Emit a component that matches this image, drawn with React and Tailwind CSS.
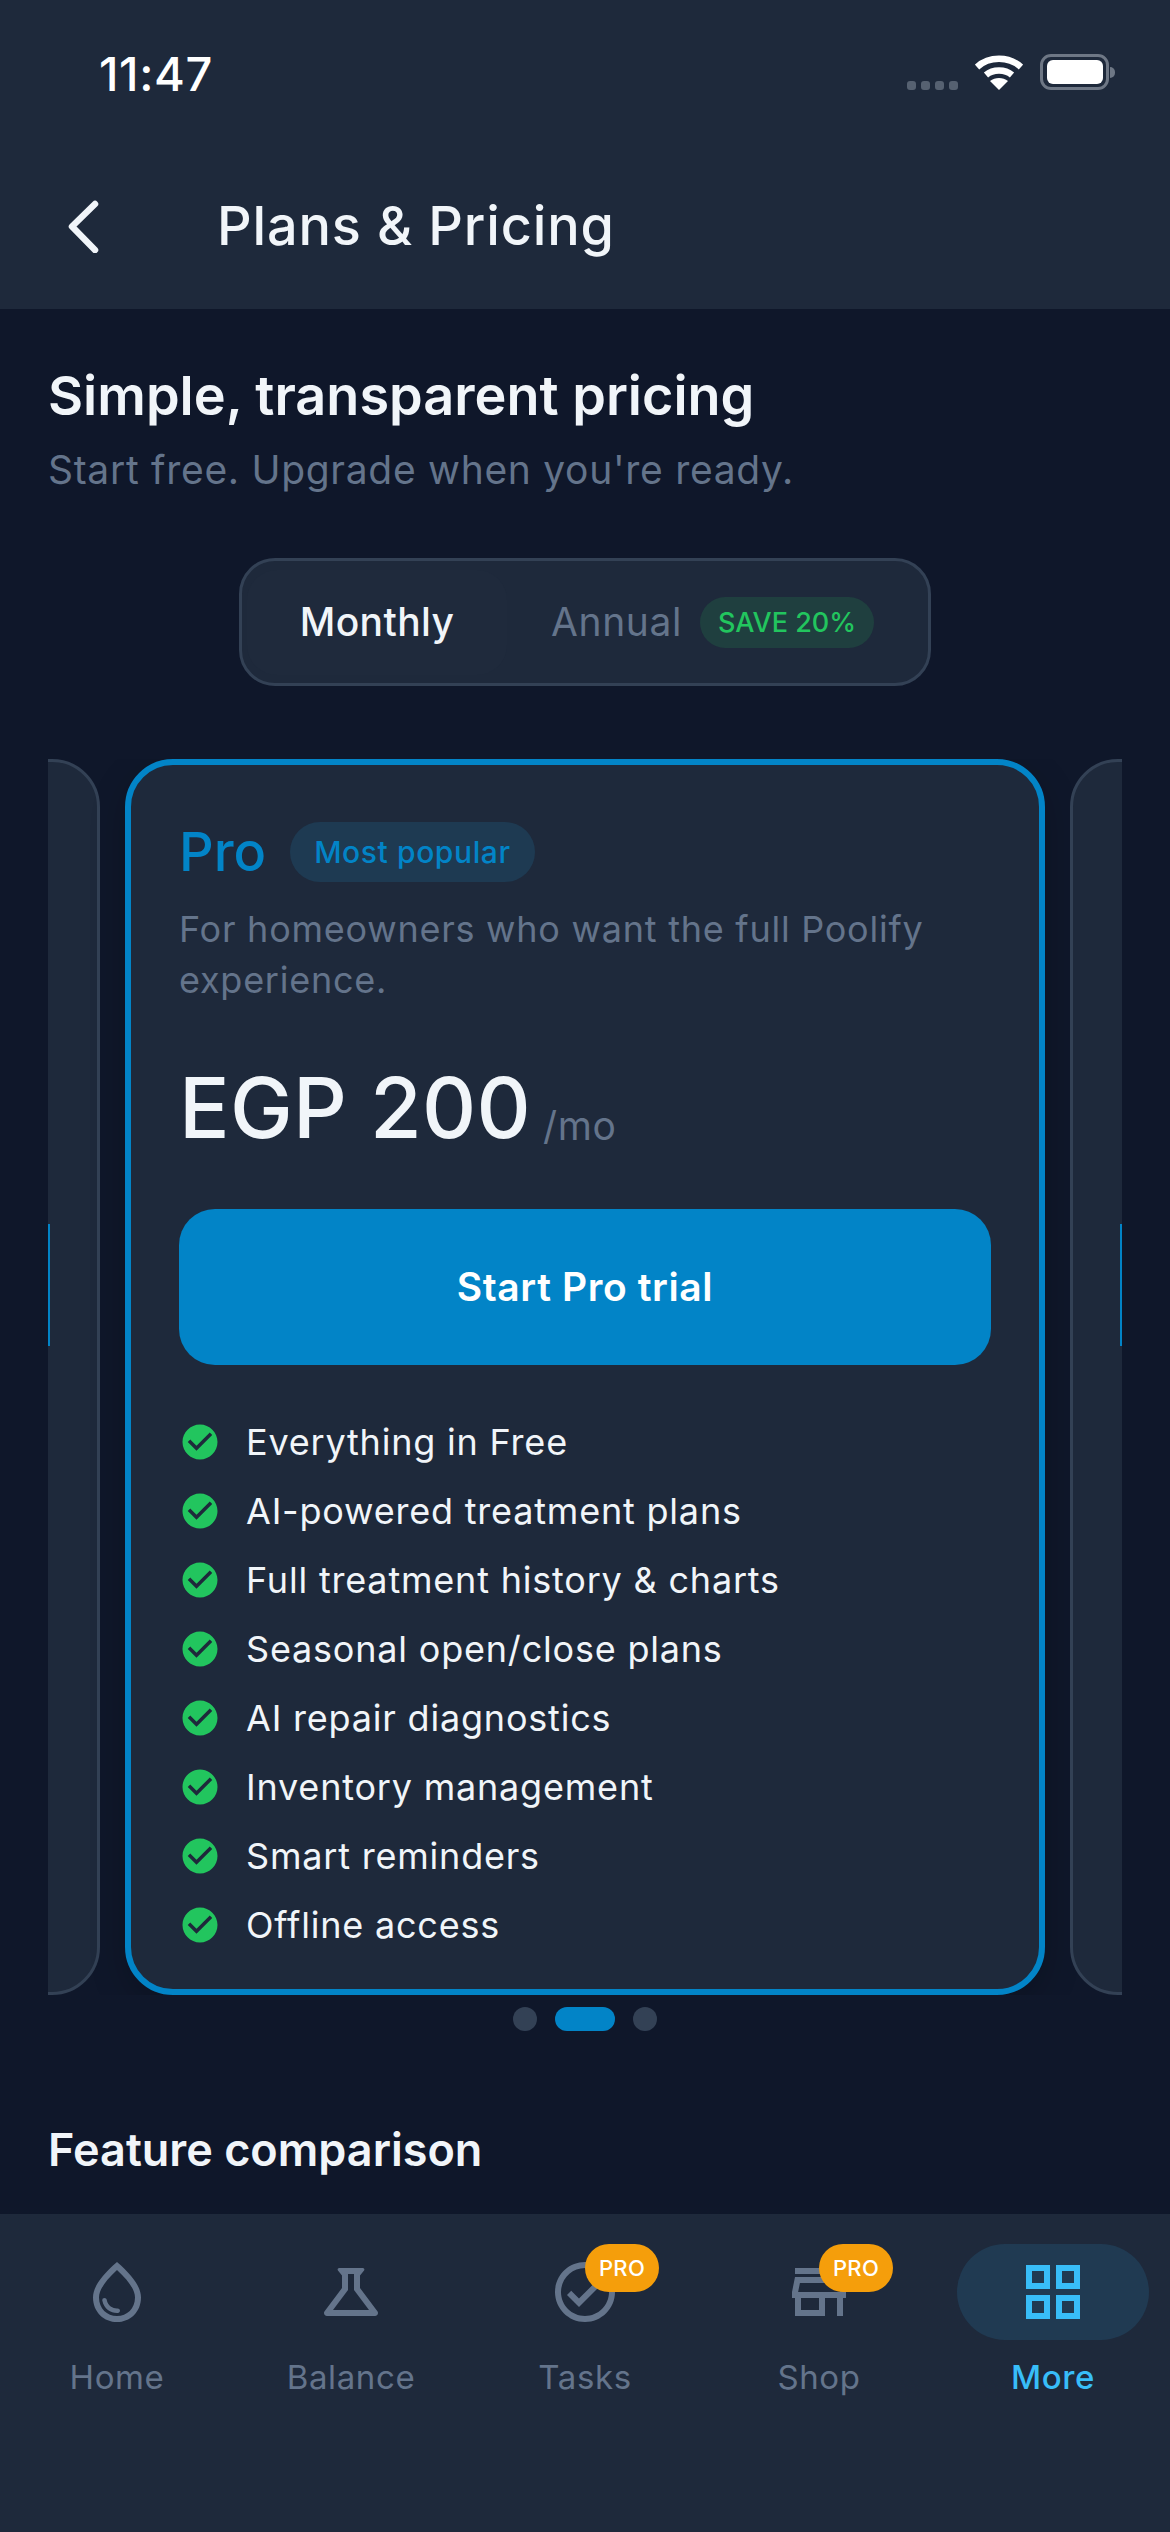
import React from 'react';
import { MdOutlineWaterDrop, MdOutlineScience, MdOutlineCheckCircle, MdOutlineStore, MdOutlineGridView, MdCheckCircle } from 'react-icons/md';

const features = [
  'Everything in Free',
  'AI-powered treatment plans',
  'Full treatment history & charts',
  'Seasonal open/close plans',
  'AI repair diagnostics',
  'Inventory management',
  'Smart reminders',
  'Offline access',
];

const tabs = [
  { label: 'Home', Icon: MdOutlineWaterDrop },
  { label: 'Balance', Icon: MdOutlineScience },
  { label: 'Tasks', Icon: MdOutlineCheckCircle, pro: true },
  { label: 'Shop', Icon: MdOutlineStore, pro: true },
  { label: 'More', Icon: MdOutlineGridView, active: true },
];

function StatusBar() {
  return (
    <div className="flex h-[144px] items-center justify-between pl-[99px] pr-[55px]">
      <span className="mt-[2px] text-[47px] font-medium leading-none tracking-[0.6px] text-white">11:47</span>
      <div className="flex items-center gap-[17px]">
        <div className="mt-[27px] flex gap-[5px]">
          <span className="h-[9px] w-[9px] rounded-[3px] bg-[#566171]" />
          <span className="h-[9px] w-[9px] rounded-[3px] bg-[#566171]" />
          <span className="h-[9px] w-[9px] rounded-[3px] bg-[#566171]" />
          <span className="h-[9px] w-[9px] rounded-[3px] bg-[#566171]" />
        </div>
        <svg width="48" height="36" viewBox="0 0 48 36" fill="none" stroke="white" strokeWidth="6.5">
          <path d="M2 13 C14 2 34 2 46 13" />
          <path d="M11 21 C18 15 30 15 37 21" />
          <path d="M24 36 L15 27 C20 23 28 23 33 27 Z" fill="white" stroke="none" />
        </svg>
        <div className="flex items-center">
          <div className="flex h-[36px] w-[69px] items-center justify-center rounded-[11px] border-[3px] border-[#6e7785]">
            <div className="h-[24px] w-[56px] rounded-[6px] bg-white" />
          </div>
          <div className="ml-[1px] h-[11px] w-[5px] rounded-r-full bg-[#6e7785]" />
        </div>
      </div>
    </div>
  );
}

function SideCard({ right }) {
  return (
    <div className={`h-[1236px] w-[920px] shrink-0 border-[3px] border-[#334155] bg-[#1e293b] pt-[462px] ${right ? 'rounded-l-[48px] pl-[47px]' : 'rounded-r-[48px] pr-[47px]'}`}>
      <div className="h-[122px] bg-[#0284c7]" />
    </div>
  );
}

function ProCard() {
  return (
    <div className="h-[1236px] w-[920px] shrink-0 rounded-[48px] border-[6px] border-[#0284c7] bg-[#1e293b] px-[48px] pt-[54px] shadow-[0_12px_36px_rgba(0,0,0,0.2)]">
      <div className="flex items-center gap-[24px]">
        <span className="text-[54px] font-medium leading-[66px] text-[#0284c7]">Pro</span>
        <span className="rounded-full bg-[#1e3a52] px-[24px] py-[12px] text-[30px] font-medium leading-[36px] tracking-[0.6px] text-[#0284c7]">Most popular</span>
      </div>
      <p className="mt-[19px] text-[36px] leading-[51px] tracking-[0.75px] text-[#64748b]">For homeowners who want the full Poolify experience.</p>
      <div className="mt-[54px] flex items-end gap-[12px]">
        <span className="text-[84px] font-medium leading-[96px] tracking-[0.3px] text-[#f1f5f9]">EGP 200</span>
        <span className="mb-[6px] text-[39px] leading-[48px] tracking-[0.6px] text-[#64748b]">/mo</span>
      </div>
      <button className="mt-[53px] flex h-[156px] w-full items-center justify-center rounded-[36px] bg-[#0284c7] text-[39px] font-semibold tracking-[0.6px] text-white">Start Pro trial</button>
      <ul className="mt-[42px] flex flex-col">
        {features.map((f) => (
          <li key={f} className="flex h-[69px] items-center">
            <MdCheckCircle size={42} className="shrink-0 text-[#22c55e]" />
            <span className="ml-[25px] text-[36px] tracking-[0.8px] text-[#f1f5f9]">{f}</span>
          </li>
        ))}
      </ul>
    </div>
  );
}

export default function App() {
  return (
    <div className="flex h-[2532px] w-[1170px] flex-col overflow-hidden bg-[#0f172a] font-['Inter',sans-serif]">
      <header className="h-[309px] shrink-0 bg-[#1e293b]">
        <StatusBar />
        <div className="flex h-[165px] items-center pb-[2px] pl-[66px]">
          <svg width="34" height="54" viewBox="0 0 34 54" fill="none" stroke="#f1f5f9" strokeWidth="6.5" strokeLinecap="round" strokeLinejoin="round">
            <path d="M29 5 L6 27.5 L29 51" />
          </svg>
          <h1 className="ml-[117px] text-[54px] font-medium tracking-[0.85px] text-[#f1f5f9]">Plans &amp; Pricing</h1>
        </div>
      </header>

      <main className="min-h-0 flex-1 overflow-hidden">
        <div className="px-[48px] pt-[54px]">
          <h2 className="text-[54px] font-semibold leading-[66px] text-[#f1f5f9]">Simple, transparent pricing</h2>
          <p className="mt-[17px] text-[39px] leading-[48px] tracking-[0.7px] text-[#64748b]">Start free. Upgrade when you're ready.</p>
        </div>

        <div className="mt-[64px] flex justify-center">
          <div className="flex h-[128px] w-[692px] items-center rounded-[36px] border-[3px] border-[#334155] bg-[#1e293b] pl-[5px]">
            <span className="flex h-[105px] w-[260px] items-center justify-center rounded-[30px] bg-[#1f2a3c] text-[39px] font-medium tracking-[0.4px] text-[#f1f5f9]">Monthly</span>
            <span className="ml-[44px] text-[39px] tracking-[0.6px] text-[#64748b]">Annual</span>
            <span className="ml-[18px] rounded-full bg-[#1f3f3f] px-[18px] py-[6px] text-[27px] font-medium leading-[39px] text-[#22c55e]">SAVE 20%</span>
          </div>
        </div>

        <div className="mx-[48px] mt-[73px] flex justify-center gap-[25px] overflow-hidden">
          <SideCard />
          <ProCard />
          <SideCard right />
        </div>

        <div className="mt-[12px] flex items-center justify-center gap-[18px]">
          <span className="h-[24px] w-[24px] rounded-full bg-[#334155]" />
          <span className="h-[24px] w-[60px] rounded-full bg-[#0284c7]" />
          <span className="h-[24px] w-[24px] rounded-full bg-[#334155]" />
        </div>

        <h3 className="ml-[48px] mt-[92px] text-[45px] font-semibold leading-[54px] text-[#f1f5f9]">Feature comparison</h3>
      </main>

      <nav className="flex h-[318px] shrink-0 items-start bg-[#1e293b] pt-[30px]">
        {tabs.map(({ label, Icon, pro, active }) => (
          <div key={label} className="flex w-[234px] flex-col items-center">
            <div className={`relative flex h-[96px] w-[192px] items-center justify-center rounded-full ${active ? 'bg-[#203a52]' : ''}`}>
              <Icon size={72} className={active ? 'text-[#38bdf8]' : 'text-[#64748b]'} />
              {pro && (
                <span className="absolute left-[96px] top-0 flex h-[48px] w-[74px] items-center justify-center rounded-full bg-[#f59e0b] text-[22px] font-medium tracking-[0.3px] text-white">PRO</span>
              )}
            </div>
            <span className={`mt-[16px] text-[33px] leading-[42px] tracking-[0.6px] ${active ? 'font-medium text-[#38bdf8]' : 'text-[#64748b]'}`}>{label}</span>
          </div>
        ))}
      </nav>
    </div>
  );
}
